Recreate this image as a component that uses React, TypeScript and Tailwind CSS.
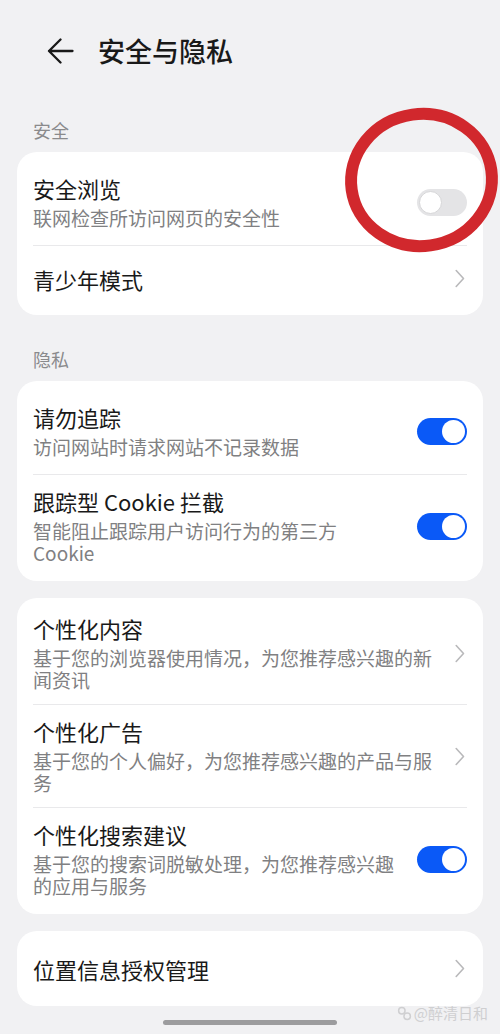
import React from 'react';

const font = { fontFamily: '"Noto Sans CJK SC", "Noto Sans", sans-serif' };

const Chevron = () => (
  <div className="w-[12px] ml-[14px] shrink-0 flex items-center">
    <svg width="10" height="19" viewBox="0 0 10 19" fill="none">
      <polyline points="1.2,1.5 8.5,9.5 1.2,17.5" stroke="#b9b9bb" strokeWidth="1.6" strokeLinecap="round" strokeLinejoin="round" />
    </svg>
  </div>
);

const Toggle = ({ on }: { on: boolean }) => (
  <div
    className={`ml-[20px] shrink-0 w-[50px] h-[27px] rounded-full p-[2px] flex ${
      on ? 'bg-[#0a59f7] justify-end' : 'bg-[#e4e4e6] justify-start'
    }`}
  >
    <div className={`w-[23px] h-[23px] rounded-full bg-white ${on ? '' : 'border border-[#d6d6d8]'}`} />
  </div>
);

type Row = {
  title: string;
  sub?: string;
  right: 'chevron' | 'on' | 'off';
  loose?: boolean; // single-line subtitle rows sit a little taller
};

const Divider = () => <div className="mx-[16px] h-px bg-[#e9e9eb]" />;

const SettingRow = ({ row }: { row: Row }) => {
  const pad = !row.sub ? 'h-[65px]' : row.loose ? 'pt-[13px] pb-[16px]' : 'py-[13px]';
  return (
    <div className={`flex items-center px-[16px] ${pad}`}>
      <div className="flex-1 min-w-0">
        <div className="text-[22px] leading-[26px] text-[#191919]">{row.title}</div>
        {row.sub && <div className="mt-[6px] text-[19px] leading-[22px] text-[#808082]">{row.sub}</div>}
      </div>
      {row.right === 'chevron' ? <Chevron /> : <Toggle on={row.right === 'on'} />}
    </div>
  );
};

const Card = ({ rows, pt, className = '' }: { rows: Row[]; pt: string; className?: string }) => (
  <div className={`mx-[17px] rounded-[20px] bg-white pb-[4px] ${pt} ${className}`}>
    {rows.map((r, i) => (
      <React.Fragment key={r.title}>
        {i > 0 && <Divider />}
        <SettingRow row={r} />
      </React.Fragment>
    ))}
  </div>
);

const SectionLabel = ({ text, mt }: { text: string; mt: string }) => (
  <div className={`${mt} mb-[10px] px-[33px] text-[18px] leading-[24px] text-[#8a8a8c]`}>{text}</div>
);

export default function App() {
  const security: Row[] = [
    { title: '安全浏览', sub: '联网检查所访问网页的安全性', right: 'off', loose: true },
    { title: '青少年模式', right: 'chevron' },
  ];
  const privacy: Row[] = [
    { title: '请勿追踪', sub: '访问网站时请求网站不记录数据', right: 'on', loose: true },
    { title: '跟踪型 Cookie 拦截', sub: '智能阻止跟踪用户访问行为的第三方 Cookie', right: 'on' },
  ];
  const personal: Row[] = [
    { title: '个性化内容', sub: '基于您的浏览器使用情况，为您推荐感兴趣的新闻资讯', right: 'chevron' },
    { title: '个性化广告', sub: '基于您的个人偏好，为您推荐感兴趣的产品与服务', right: 'chevron' },
    { title: '个性化搜索建议', sub: '基于您的搜索词脱敏处理，为您推荐感兴趣的应用与服务', right: 'on' },
  ];

  return (
    <div className="relative w-[500px] h-[1034px] overflow-hidden bg-[#f1f1f3]" style={font}>
      {/* header */}
      <div className="flex items-center pt-[36px] pl-[47px]">
        <svg width="27" height="26" viewBox="0 0 27 26" fill="none">
          <path d="M25.5 13H2 M13.5 1.5 L2 13 L13.5 24.5" stroke="#191919" strokeWidth="2.3" strokeLinecap="round" strokeLinejoin="round" />
        </svg>
        <h1 className="ml-[24px] text-[27px] leading-[30px] font-medium text-[#191919]">安全与隐私</h1>
      </div>

      <SectionLabel text="安全" mt="mt-[52px]" />
      <Card rows={security} pt="pt-[10px]" />

      <SectionLabel text="隐私" mt="mt-[32px]" />
      <Card rows={privacy} pt="pt-[10px]" />

      <Card rows={personal} pt="pt-[4px]" className="mt-[17px]" />

      <div className="mt-[17px] mx-[17px] h-[75px] rounded-[20px] bg-white flex items-center px-[16px]">
        <div className="flex-1 text-[22px] leading-[26px] text-[#191919]">位置信息授权管理</div>
        <Chevron />
      </div>

      <div className="mx-auto mt-[14px] w-[174px] h-[5px] rounded-full bg-[#9c9c9e]" />

      {/* annotation ring */}
      <svg className="absolute left-[340px] top-[103px]" width="165" height="155" viewBox="0 0 165 155" fill="none">
        <ellipse cx="81.5" cy="77" rx="70.5" ry="66" stroke="#d1282d" strokeWidth="12" transform="rotate(-8 81.5 77)" />
      </svg>

      {/* watermark */}
      <div className="absolute right-[12px] bottom-[13px] flex items-center gap-[2px] text-[15px] leading-[16px] text-[#cfcfd1]">
        <svg width="15" height="15" viewBox="0 0 14 14" fill="none">
          <circle cx="4.5" cy="4.5" r="3" stroke="#cfcfd1" strokeWidth="1.4" />
          <circle cx="9.5" cy="9.5" r="3" stroke="#cfcfd1" strokeWidth="1.4" />
        </svg>
        <span>@醉清日和</span>
      </div>
    </div>
  );
}
